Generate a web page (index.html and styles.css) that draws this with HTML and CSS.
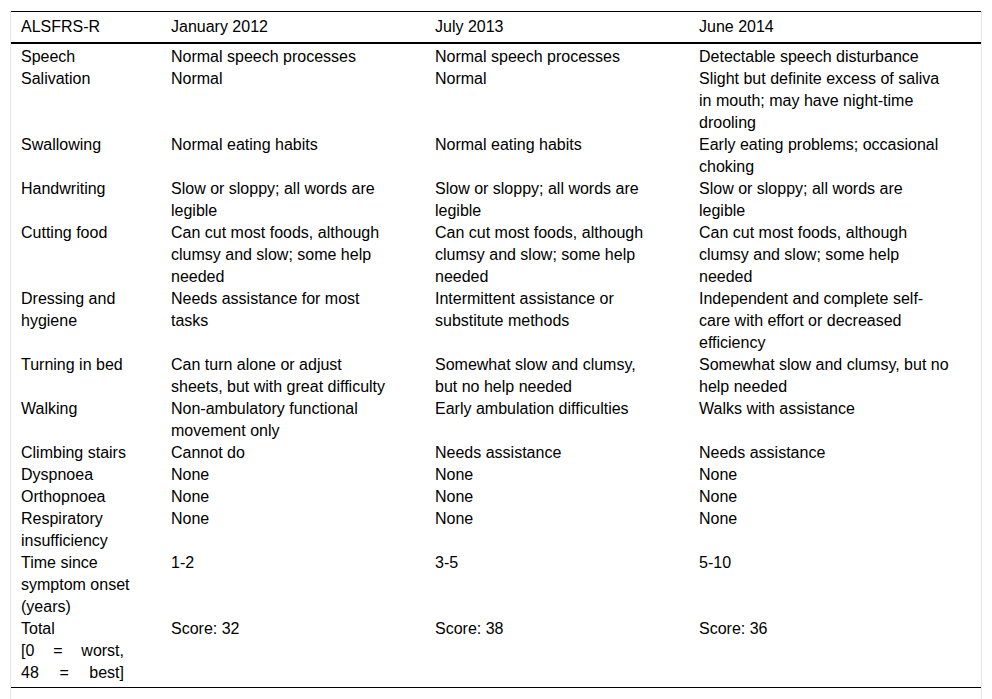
FILE: index.html
```html
<!DOCTYPE html>
<html lang="en">
<head>
<meta charset="utf-8">
<title>ALSFRS-R</title>
<link rel="stylesheet" href="styles.css">
</head>
<body>
<div class="frame">
  <table class="scores">
    <colgroup>
      <col class="c1"><col class="c2"><col class="c3"><col class="c4">
    </colgroup>
    <thead>
      <tr><th>ALSFRS-R</th><th>January 2012</th><th>July 2013</th><th>June 2014</th></tr>
    </thead>
    <tbody>
      <tr><td>Speech</td><td>Normal speech processes</td><td>Normal speech processes</td><td>Detectable speech disturbance</td></tr>
      <tr><td>Salivation</td><td>Normal</td><td>Normal</td><td>Slight but definite excess of saliva in mouth; may have night-time drooling</td></tr>
      <tr><td>Swallowing</td><td>Normal eating habits</td><td>Normal eating habits</td><td>Early eating problems; occasional choking</td></tr>
      <tr><td>Handwriting</td><td>Slow or sloppy; all words are legible</td><td>Slow or sloppy; all words are legible</td><td>Slow or sloppy; all words are legible</td></tr>
      <tr><td>Cutting food</td><td>Can cut most foods, although clumsy and slow; some help needed</td><td>Can cut most foods, although clumsy and slow; some help needed</td><td>Can cut most foods, although clumsy and slow; some help needed</td></tr>
      <tr><td>Dressing and hygiene</td><td>Needs assistance for most tasks</td><td>Intermittent assistance or substitute methods</td><td>Independent and complete self-care with effort or decreased efficiency</td></tr>
      <tr><td>Turning in bed</td><td>Can turn alone or adjust sheets, but with great difficulty</td><td>Somewhat slow and clumsy, but no help needed</td><td>Somewhat slow and clumsy, but no help needed</td></tr>
      <tr><td>Walking</td><td>Non-ambulatory functional movement only</td><td>Early ambulation difficulties</td><td>Walks with assistance</td></tr>
      <tr><td>Climbing stairs</td><td>Cannot do</td><td>Needs assistance</td><td>Needs assistance</td></tr>
      <tr><td>Dyspnoea</td><td>None</td><td>None</td><td>None</td></tr>
      <tr><td>Orthopnoea</td><td>None</td><td>None</td><td>None</td></tr>
      <tr><td>Respiratory insufficiency</td><td>None</td><td>None</td><td>None</td></tr>
      <tr><td>Time since symptom onset (years)</td><td>1-2</td><td>3-5</td><td>5-10</td></tr>
      <tr><td class="justify">Total<br>[0 = worst,<br>48 = best]</td><td>Score: 32</td><td>Score: 38</td><td>Score: 36</td></tr>
    </tbody>
  </table>
</div>
</body>
</html>
```

FILE: styles.css
```css
html, body {
  margin: 0;
  padding: 0;
  background: #fff;
}

body {
  font-family: "Liberation Sans", Arial, sans-serif;
  font-size: 16px;
  color: #000;
}

.frame {
  margin: 11px 0 0 10px;
  width: 970px;
  min-height: 700px;
  border-left: 1px solid #e6e6e6;
  border-right: 1px solid #e6e6e6;
}

.scores {
  width: 970px;
  table-layout: fixed;
  border-collapse: collapse;
  border-top: 1px solid #000;
  border-bottom: 1px solid #000;
}

.c1 { width: 150px; }
.c2 { width: 264px; }
.c3 { width: 264px; }
.c4 { width: 292px; }

.scores th,
.scores td {
  box-sizing: border-box;
  text-align: left;
  vertical-align: top;
  font-weight: normal;
  line-height: 22px;
  padding: 0 35px 0 10px;
}

.scores th:first-child,
.scores td:first-child {
  padding-right: 30px;
}

.scores th:last-child,
.scores td:last-child {
  padding-right: 28px;
}

.scores thead th {
  padding-top: 4px;
  padding-bottom: 4px;
  border-bottom: 2px solid #000;
}

.scores tbody tr:first-child td {
  padding-top: 2px;
}

.scores tbody tr:last-child td {
  padding-bottom: 3px;
}

.scores td.justify {
  text-align: justify;
  text-align-last: justify;
  padding-right: 37px;
}
```
